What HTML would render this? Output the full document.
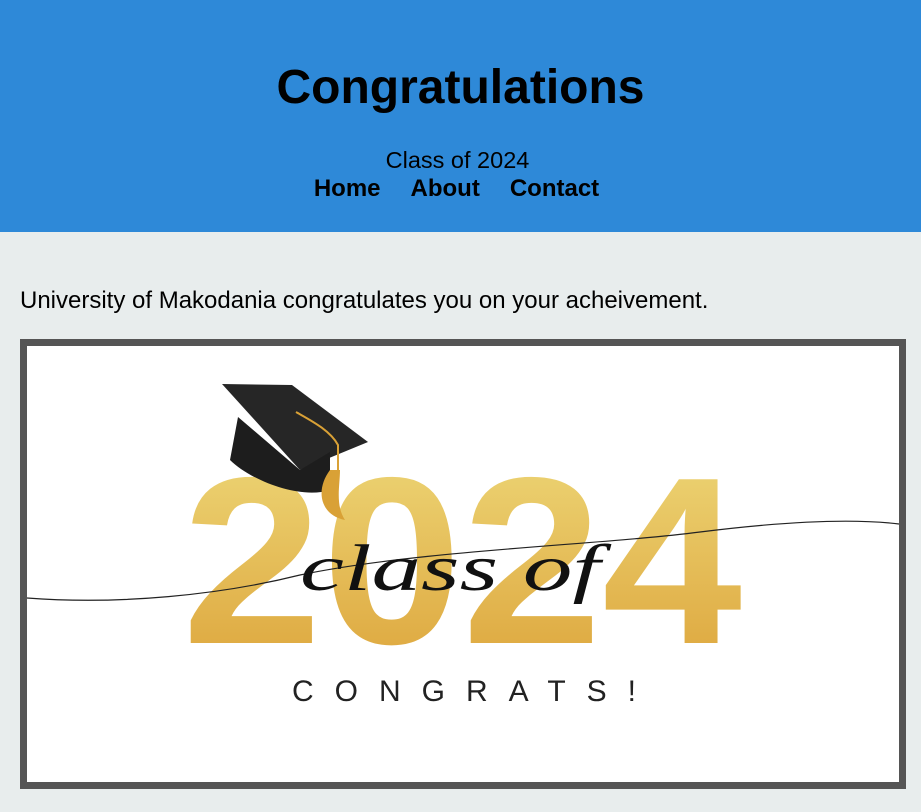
<!DOCTYPE html>
<html><head><meta charset="utf-8"><style>
html,body{margin:0;padding:0;background:#e8eded;font-family:"Liberation Sans",Arial,sans-serif;width:921px;height:812px;overflow:hidden}
header{background:#2e89d8;height:232px;text-align:center;position:relative}
h1{margin:0;position:absolute;top:60px;left:0;right:0;font-size:48px;font-weight:bold;color:#000}
.sub{position:absolute;top:147px;left:-6px;right:0;font-size:23.5px}
nav{position:absolute;top:175px;left:-8px;right:0;font-size:24px;font-weight:bold;word-spacing:0}
nav span{margin:0 15px}
p{position:absolute;top:287px;left:20px;margin:0;font-size:24px}
.box{position:absolute;left:20px;top:339px;width:872px;height:436px;border:7px solid #555;background:#fff;overflow:hidden}
</style></head><body>
<header><h1>Congratulations</h1><div class="sub">Class of 2024</div><nav><span>Home</span><span>About</span><span>Contact</span></nav></header>
<p>University of Makodania congratulates you on your acheivement.</p>
<div class="box">
<svg width="872" height="436" viewBox="27 346 872 436">
<defs><linearGradient id="g" x1="0" y1="0" x2="0" y2="1"><stop offset="0" stop-color="#eed97a"/><stop offset="1" stop-color="#dca238"/></linearGradient></defs>
<text x="182" y="643" font-family="Liberation Sans" font-weight="bold" font-size="238" fill="url(#g)" textLength="560" lengthAdjust="spacingAndGlyphs">2024</text>
<path d="M27 598 C120 605 220 595 300 575 C420 550 600 545 700 532 C780 522 850 518 899 524" stroke="#222" stroke-width="1.2" fill="none"/>
<text x="300" y="590" font-family="Liberation Serif" font-style="italic" font-size="66" fill="#111" textLength="300" lengthAdjust="spacingAndGlyphs">class of</text>
<polygon points="222,384 292,385 368,442 300,470" fill="#262626"/>
<path d="M238 417 L300 470 L330 452 L330 490 C300 500 250 480 230 460 Z" fill="#1d1d1d"/>
<path d="M296 412 C310 420 330 430 338 445 L338 470" stroke="#d9a136" stroke-width="2" fill="none"/>
<path d="M330 470 C315 490 320 515 345 520 C335 505 340 485 340 470 Z" fill="#d9a136"/>
<text x="292" y="701" font-family="Liberation Sans" font-size="30" fill="#222" textLength="344" lengthAdjust="spacing">CONGRATS!</text>
</svg>
</div>
</body></html>
